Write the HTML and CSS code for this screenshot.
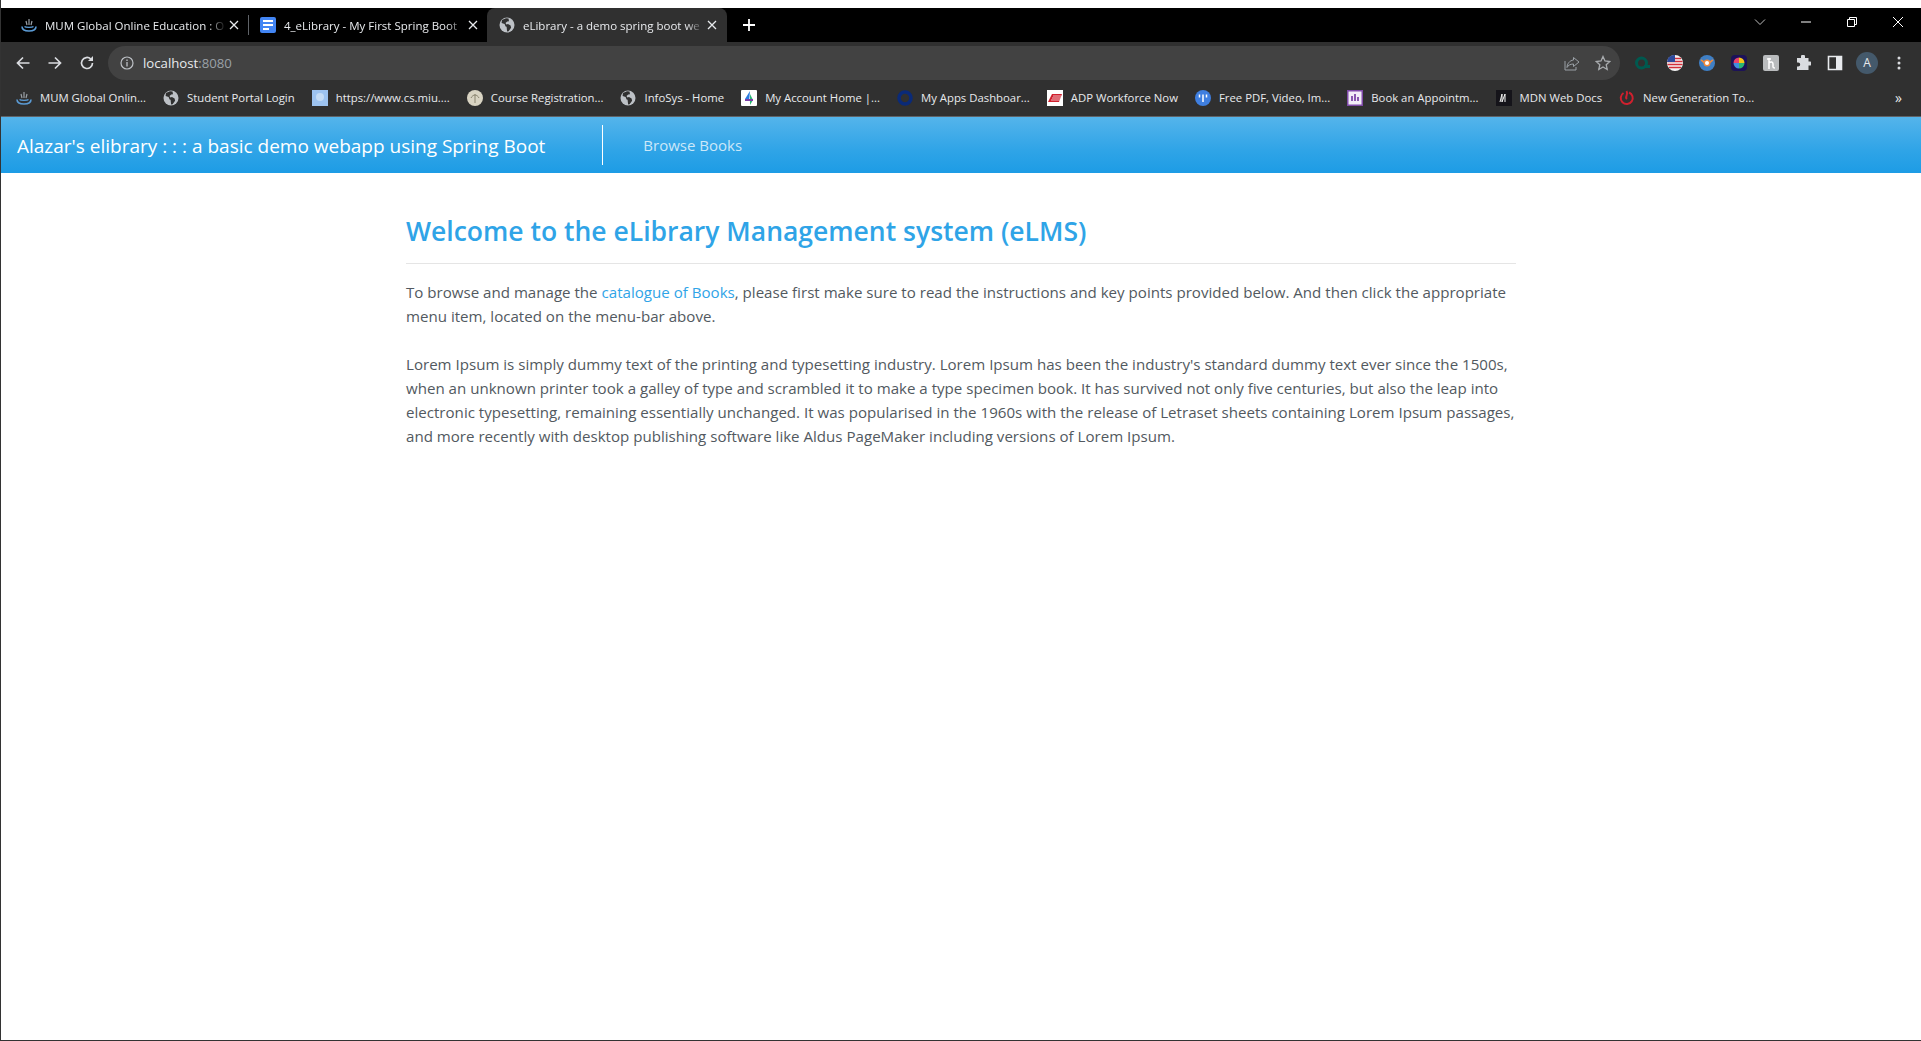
FILE: index.html
```html
<!doctype html>
<html lang="en">
  <head>
    <meta charset="utf-8">
    <meta name="viewport" content="width=device-width, initial-scale=1">
    <title>eLibrary - a demo spring boot webapp</title>
    <link rel="stylesheet" href="styles.css">
  </head>
  <body>
    <svg class="defs" width="0" height="0">
      <symbol id="globe" viewBox="0 0 16 16">
        <circle cx="8" cy="8" r="7.5" fill="#bdc1c6"/>
        <path d="M7 1.2 3 3 2.600 6l3 1 1 2.500 1 .2.500 4.800 1.500-.2 2.500-3.500-.5-2.300L9 7 7.400 7.600 6.500 6l1.700-1.500L10 4.200 9.500 1.500Z" fill="#303030"/>
      </symbol>
      <symbol id="cup" viewBox="0 0 16 16">
        <path d="M1 9.500c0 2.800 3 4.500 7 4.500s7-1.700 7-4.500" fill="none" stroke="#5b9bd5" stroke-width="1.600"/>
        <path d="M3.500 9.500c1 1.200 8 1.200 9 0" fill="none" stroke="#5b9bd5" stroke-width="1.200"/>
        <path d="M8 2v6M5 4l1 4M11 4l-1 4" stroke="#9aa0a6" stroke-width="1.200" fill="none"/>
      </symbol>
      <symbol id="close" viewBox="0 0 12 12">
        <path d="M2 2l8 8M10 2 2 10" stroke="#e8eaed" stroke-width="1.300"/>
      </symbol>
    </svg>

    <div class="top-strip"></div>

    <div class="tabstrip">
      <div class="tab">
        <svg class="favicon"><use href="#cup"/></svg>
        <span class="tab-title">MUM Global Online Education : O</span>
        <svg class="tab-close"><use href="#close"/></svg>
      </div>
      <div class="tab tab-sep">
        <svg class="favicon" viewBox="0 0 16 16">
          <rect width="16" height="16" rx="2" fill="#4285f4"/>
          <path d="M3 4h10M3 8h10M3 12h6" stroke="#fff" stroke-width="1.800"/>
        </svg>
        <span class="tab-title">4_eLibrary - My First Spring Boot</span>
        <svg class="tab-close"><use href="#close"/></svg>
      </div>
      <div class="tab tab-active">
        <svg class="favicon"><use href="#globe"/></svg>
        <span class="tab-title">eLibrary - a demo spring boot we</span>
        <svg class="tab-close"><use href="#close"/></svg>
      </div>
      <svg class="new-tab" viewBox="0 0 14 14"><path d="M7 1v12M1 7h12" stroke="#fff" stroke-width="1.800"/></svg>
      <div class="window-controls">
        <svg viewBox="0 0 12 12"><path d="M1 3.500 6 8.500 11 3.500" fill="none" stroke="#bdbdbd"/></svg>
        <svg viewBox="0 0 12 12"><path d="M1 6h10" stroke="#fff"/></svg>
        <svg viewBox="0 0 12 12"><path d="M1.500 3.500h7v7h-7zM3.500 3.500v-2h7v7h-2" fill="none" stroke="#fff"/></svg>
        <svg viewBox="0 0 12 12"><path d="M1 1l10 10M11 1 1 11" stroke="#fff"/></svg>
      </div>
    </div>

    <div class="toolbar">
      <svg class="nav-icon" viewBox="0 0 16 16"><path d="M14.500 8H2.500M8 2.500 2.500 8 8 13.500" fill="none" stroke="#dadce0" stroke-width="1.700"/></svg>
      <svg class="nav-icon" viewBox="0 0 16 16"><path d="M1.500 8h12M8 2.500 13.500 8 8 13.500" fill="none" stroke="#dadce0" stroke-width="1.700"/></svg>
      <svg class="nav-icon" viewBox="0 0 16 16"><path d="M13.500 8A5.500 5.500 0 1 1 11.800 4" fill="none" stroke="#dadce0" stroke-width="1.700"/><path d="M14 1v5H9z" fill="#dadce0"/></svg>
      <div class="omnibox">
        <svg class="info" viewBox="0 0 14 14"><circle cx="7" cy="7" r="6" fill="none" stroke="#bdc1c6" stroke-width="1.200"/><path d="M7 6v4.500M7 3.500v1.500" stroke="#bdc1c6" stroke-width="1.300"/></svg>
        <span class="url">localhost<span class="url-port">:8080</span></span>
        <svg class="omni-icon share" viewBox="0 0 16 16"><path d="M9.500 2.500 15 7l-5.500 4.500V9C6 9 4 10.500 3 12.500 3 9 5.500 5.500 9.500 5ZM1 6v9h11v-3" fill="none" stroke="#9aa0a6"/></svg>
        <svg class="omni-icon" viewBox="0 0 16 16"><path d="M8 1.500 10 6l4.700.5-3.500 3.200 1 4.800L8 12l-4.200 2.500 1-4.800L1.300 6.500 6 6Z" fill="none" stroke="#a8abae" stroke-width="1.300"/></svg>
      </div>
      <div class="extensions">
        <svg viewBox="0 0 16 16"><path d="M1.500 8a5 5 0 0 1 10 0 5 5 0 0 1-10 0ZM9 11.500h6" fill="none" stroke="#00594f" stroke-width="3"/></svg>
        <svg viewBox="0 0 16 16"><circle cx="8" cy="8" r="8" fill="#f4f4f4"/><path d="M2 3.500h12M.5 6.500h15M.5 9.500h15M2 12.500h12" stroke="#d22f3a" stroke-width="1.400"/><path d="M1 3.500A8 8 0 0 1 8 0v7H0Z" fill="#2d4a9c"/></svg>
        <svg viewBox="0 0 16 16"><circle cx="8" cy="8" r="8" fill="#3f7fc4"/><path d="M2 5c2 1 2 2 3 2h6c1 0 1-1 3-2" stroke="#f08a3c" stroke-width="1.800" fill="none"/><circle cx="8" cy="8" r="3.500" fill="#f08a3c"/><circle cx="8" cy="8" r="2" fill="#fff"/></svg>
        <svg viewBox="0 0 16 16"><rect width="16" height="16" rx="4" fill="#1c1259"/><path d="M8 8V2.500A5.500 5.500 0 0 1 13.500 8Z" fill="#f5c518"/><path d="M8 8h5.500A5.500 5.500 0 0 1 8 13.500Z" fill="#2bb673"/><path d="M8 8v5.500A5.500 5.500 0 0 1 2.500 8Z" fill="#3f8fe0"/><path d="M8 8H2.500A5.500 5.500 0 0 1 8 2.500Z" fill="#e8436e"/></svg>
        <svg viewBox="0 0 16 16"><rect width="16" height="16" rx="2" fill="#b9bbbd"/><path d="M6 3v11M6 8c2-2 4-1 4 1v3c0 1 1 1 2 1M4 4h4" fill="none" stroke="#fff" stroke-width="1.500"/></svg>
        <svg viewBox="0 0 16 16"><path d="M6 1.500a2 2 0 0 1 4 0V3h3.500v3.500H15a2 2 0 0 1 0 4h-1.500V15H2v-3.500h1.200a2 2 0 0 0 0-4H2V3h4Z" fill="#dadce0"/></svg>
        <svg viewBox="0 0 16 16"><path d="M1.500 1.500h13v13h-13z" fill="none" stroke="#e8eaed" stroke-width="1.600"/><path d="M9 1.500h6v13H9z" fill="#e8eaed"/></svg>
        <span class="avatar">A</span>
        <svg viewBox="0 0 16 16"><circle cx="8" cy="3" r="1.500" fill="#dadce0"/><circle cx="8" cy="8" r="1.500" fill="#dadce0"/><circle cx="8" cy="13" r="1.500" fill="#dadce0"/></svg>
      </div>
    </div>

    <div class="bookmarks">
      <a class="bookmark"><svg><use href="#cup"/></svg>MUM Global Onlin...</a>
      <a class="bookmark"><svg><use href="#globe"/></svg>Student Portal Login</a>
      <a class="bookmark"><svg viewBox="0 0 16 16"><rect width="16" height="16" fill="#9dc3f0"/><circle cx="8" cy="7" r="4" fill="#c5dcf5"/></svg>https://www.cs.miu....</a>
      <a class="bookmark"><svg viewBox="0 0 16 16"><circle cx="8" cy="8" r="8" fill="#d9d4c3"/><path d="M8 4v9M4 8c2-4 6-4 8 0" stroke="#8a8570" fill="none"/></svg>Course Registration...</a>
      <a class="bookmark"><svg><use href="#globe"/></svg>InfoSys - Home</a>
      <a class="bookmark"><svg viewBox="0 0 16 16"><rect width="16" height="16" rx="1" fill="#fff"/><path d="M9 1 4 9h4v3z" fill="#2b7de0"/><path d="M9 4v11l3-5z" fill="#2bb673"/><path d="M4 9h8v2H4z" fill="#7b3fa8"/></svg>My Account Home |...</a>
      <a class="bookmark"><svg viewBox="0 0 16 16"><circle cx="8" cy="8" r="6" fill="none" stroke="#0a2a78" stroke-width="3.500"/></svg>My Apps Dashboar...</a>
      <a class="bookmark"><svg viewBox="0 0 16 16"><rect width="16" height="16" fill="#fff"/><path d="M1 12 5 4h10l-3 8Z" fill="#d0202e"/><path d="M4 10h9M5 8h9M6 6h8" stroke="#fff" stroke-width=".7"/></svg>ADP Workforce Now</a>
      <a class="bookmark"><svg viewBox="0 0 16 16"><circle cx="8" cy="8" r="8" fill="#3f7fe0"/><path d="M4.500 4.500v3M8 4.500V12M11.500 4.500v3" stroke="#fff" stroke-width="1.500"/></svg>Free PDF, Video, Im...</a>
      <a class="bookmark"><svg viewBox="0 0 16 16"><rect x=".75" y=".75" width="14.500" height="14.500" fill="#f3eef8" stroke="#7f4aa8" stroke-width="1.500"/><path d="M5 11V6M8 11V4M11 11V7" stroke="#7f4aa8" stroke-width="1.800"/></svg>Book an Appointm...</a>
      <a class="bookmark"><svg viewBox="0 0 16 16"><rect width="16" height="16" fill="#15141a"/><path d="M4 12 6 4v8l3-8v8" fill="none" stroke="#f4f4f4"/></svg>MDN Web Docs</a>
      <a class="bookmark"><svg viewBox="0 0 16 16"><path d="M10 2.500a6 6 0 1 1-5.500.5M7.500 1C10 5 5 7 8 9" fill="none" stroke="#d0202e" stroke-width="2"/></svg>New Generation To...</a>
      <span class="more">&raquo;</span>
    </div>

    <nav class="navbar">
      <a class="brand">Alazar's elibrary : : : a basic demo webapp using Spring Boot</a>
      <a class="nav-link">Browse Books</a>
    </nav>

    <main class="container">
      <h2 class="page-title">Welcome to the eLibrary Management system (eLMS)</h2>
      <hr class="title-rule">
      <p>To browse and manage the <a class="link">catalogue of Books</a>, please first make sure to read the instructions and key points provided below. And then click the appropriate menu item, located on the menu-bar above.</p>
      <p>Lorem Ipsum is simply dummy text of the printing and typesetting industry. Lorem Ipsum has been the industry's standard dummy text ever since the 1500s, when an unknown printer took a galley of type and scrambled it to make a type specimen book. It has survived not only five centuries, but also the leap into electronic typesetting, remaining essentially unchanged. It was popularised in the 1960s with the release of Letraset sheets containing Lorem Ipsum passages, and more recently with desktop publishing software like Aldus PageMaker including versions of Lorem Ipsum.</p>
    </main>
  </body>
</html>
```
FILE: styles.css
```css
html, body {
  height: 100%;
}
body {
  margin: 0;
  display: flex;
  flex-direction: column;
  overflow: hidden;
  background: #fff;
  font-family: "Open Sans", "Noto Sans", sans-serif;
  border-left: 1px solid #333;
  border-bottom: 1px solid #333;
  box-sizing: border-box;
}
.defs {
  position: absolute;
}
.top-strip {
  height: 8px;
  margin-left: -1px;
  background: #fff;
  flex: none;
}

/* browser tabs */
.tabstrip {
  height: 34px;
  flex: none;
  display: flex;
  align-items: stretch;
  background: #000;
  padding-left: 14px;
  color: #e8eaed;
  font-size: 11.500px;
}
.tab {
  width: 233px;
  display: flex;
  align-items: center;
  padding: 0 8px 0 6px;
  box-sizing: border-box;
  position: relative;
}
.tab-sep {
  padding: 0 2px 0 12px;
}
.tab-sep::before {
  content: "";
  position: absolute;
  left: 0;
  top: 7px;
  bottom: 7px;
  width: 1px;
  background: #5f6368;
}
.tab-active {
  background: #303030;
  border-radius: 8px 8px 0 0;
  margin-left: 6px;
  width: 240px;
  padding: 0 9px 0 12px;
}
.favicon {
  width: 16px;
  height: 16px;
  flex: none;
  margin-right: 8px;
}
.tab-title {
  flex: 1;
  overflow: hidden;
  white-space: nowrap;
  -webkit-mask-image: linear-gradient(to right, #000 calc(100% - 18px), transparent);
  mask-image: linear-gradient(to right, #000 calc(100% - 18px), transparent);
}
.tab-close {
  width: 12px;
  height: 12px;
  flex: none;
  margin-left: 2px;
}
.new-tab {
  width: 14px;
  height: 14px;
  align-self: center;
  margin-left: 15px;
}
.window-controls {
  margin-left: auto;
  display: flex;
  gap: 34px;
  align-items: center;
  padding-right: 17px;
}
.window-controls svg {
  width: 12px;
  height: 12px;
  margin-top: -6px;
}

/* address bar */
.toolbar {
  height: 38px;
  flex: none;
  display: flex;
  align-items: center;
  background: #303030;
  padding: 4px 0 0 14px;
  box-sizing: border-box;
}
.nav-icon {
  width: 16px;
  height: 16px;
  margin-right: 16px;
}
.omnibox {
  width: 1512px;
  height: 34px;
  margin-left: -3px;
  box-sizing: border-box;
  padding: 0 9px 0 12px;
  border-radius: 17px;
  background: #424242;
  display: flex;
  align-items: center;
  color: #e8eaed;
  font-size: 13.200px;
}
.info {
  width: 14px;
  height: 14px;
  margin-right: 9px;
}
.url {
  flex: 1;
}
.url-port {
  color: #9aa0a6;
}
.omni-icon {
  width: 16px;
  height: 16px;
  margin-left: 15px;
}
.extensions {
  display: flex;
  align-items: center;
  gap: 16px;
  margin-left: 15px;
}
.extensions svg {
  width: 16px;
  height: 16px;
}
.avatar {
  width: 22px;
  height: 22px;
  margin: 0 -3px;
  border-radius: 50%;
  background: #44596b;
  color: #e8eaed;
  font-size: 12px;
  text-align: center;
  line-height: 22px;
}

/* bookmarks */
.bookmarks {
  height: 35px;
  padding: 0 0 1px 15px;
  flex: none;
  display: flex;
  align-items: center;
  gap: 17px;
  background: #303030;
  border-bottom: 1px solid #5f6368;
  color: #e8eaed;
  font-size: 11.350px;
  white-space: nowrap;
}
.bookmark {
  display: flex;
  align-items: center;
  gap: 8px;
}
.bookmark svg {
  width: 16px;
  height: 16px;
  flex: none;
}
.more {
  margin-left: auto;
  margin-right: 19px;
  font-size: 14px;
}

/* page */
.navbar {
  height: 56px;
  flex: none;
  display: flex;
  align-items: center;
  background-image: linear-gradient(#54b4eb, #2fa4e7 60%, #1d9ce5);
  padding-left: 16px;
}
.brand {
  color: #fff;
  font-size: 19px;
  line-height: 38px;
  padding: 2px 57px 0 0;
  border-right: 1px solid #fff;
}
.nav-link {
  color: rgba(255, 255, 255, 0.75);
  font-size: 15px;
  margin-left: 40px;
}
.container {
  width: 1110px;
  margin: 0 auto;
  padding-top: 40px;
  color: #525960;
  font-size: 15.100px;
  line-height: 24px;
}
.page-title {
  margin: 0;
  color: #2fa4e7;
  font-size: 26.500px;
  font-weight: 600;
  line-height: 36px;
}
.title-rule {
  margin: 14px 0 16px;
  border: 0;
  border-top: 1px solid rgba(0, 0, 0, 0.1);
}
p {
  margin: 0 0 24px;
}
.link {
  color: #2fa4e7;
}
```
